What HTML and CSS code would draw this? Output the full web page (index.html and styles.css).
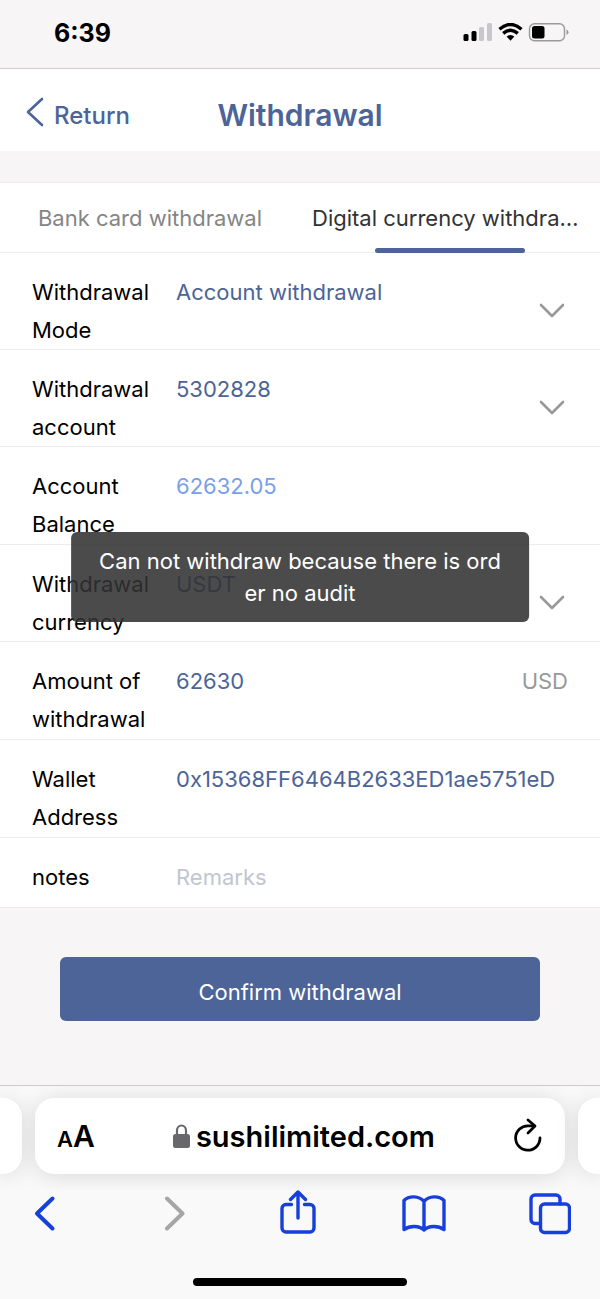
FILE: index.html
```html
<!DOCTYPE html>
<html lang="en">
<head>
<meta charset="utf-8">
<meta name="viewport" content="width=device-width, initial-scale=1">
<title>Withdrawal</title>
<link rel="stylesheet" href="styles.css">
</head>
<body>
<div class="screen">
  <div class="status">
    <span class="status-time">6:39</span>
    <svg class="status-icons" width="106" height="20" viewBox="0 0 106 20" aria-hidden="true">
      <rect x="0.5" y="11" width="5" height="7" rx="1.5"/>
      <rect x="8.500" y="8" width="5" height="10" rx="1.500"/>
      <rect x="16" y="4" width="5" height="14" rx="1.500" fill="#c8c7c9"/>
      <rect x="24" y="0" width="5" height="18" rx="1.500" fill="#c8c7c9"/>
      <g fill="none" stroke="#000" stroke-width="3.400">
        <path d="M36.500 6.200Q47.500-3.200 58.500 6.200"/>
        <path d="M40.200 10.400Q47.500 4.200 54.800 10.400"/>
      </g>
      <path d="M43.600 13.600Q47.500 10.600 51.400 13.600L47.500 17.800Z"/>
      <rect x="66.500" y="0.700" width="35" height="17" rx="5" fill="none" stroke="#9a999b" stroke-width="1.400"/>
      <rect x="69" y="3" width="12.500" height="12.500" rx="2.500"/>
      <path d="M103.500 6.500q2 .8 2 2.700t-2 2.700z" fill="#9a999b"/>
    </svg>
  </div>

  <main class="page">
    <header class="header">
      <a class="back" href="#">
        <svg width="18" height="30" viewBox="0 0 18 30" aria-hidden="true"><path d="M16 2L2 15l14 13" fill="none" stroke="currentColor" stroke-width="2.600" stroke-linecap="round" stroke-linejoin="round"/></svg>
        <span>Return</span>
      </a>
      <h1 class="title">Withdrawal</h1>
    </header>

    <nav class="tabs">
      <button class="tab" type="button"><span class="tab-text">Bank card withdrawal</span></button>
      <button class="tab tab-active" type="button"><span class="tab-text">Digital currency withdrawal</span></button>
    </nav>

    <form class="form">
      <div class="row">
        <label class="label" for="mode">Withdrawal Mode</label>
        <select class="field" id="mode"><option>Account withdrawal</option></select>
        <svg class="chevron" width="26" height="16" viewBox="0 0 26 16" aria-hidden="true"><path d="M2 2l11 11L24 2"/></svg>
      </div>
      <div class="row">
        <label class="label" for="account">Withdrawal account</label>
        <select class="field" id="account"><option>5302828</option></select>
        <svg class="chevron" width="26" height="16" viewBox="0 0 26 16" aria-hidden="true"><path d="M2 2l11 11L24 2"/></svg>
      </div>
      <div class="row row-entry">
        <label class="label" for="balance">Account Balance</label>
        <output class="field field-balance" id="balance">62632.05</output>
      </div>
      <div class="row">
        <label class="label" for="currency">Withdrawal currency</label>
        <select class="field" id="currency"><option>USDT</option></select>
        <svg class="chevron" width="26" height="16" viewBox="0 0 26 16" aria-hidden="true"><path d="M2 2l11 11L24 2"/></svg>
      </div>
      <div class="row row-entry">
        <label class="label" for="amount">Amount of withdrawal</label>
        <input class="field" id="amount" type="text" value="62630">
        <span class="unit">USD</span>
      </div>
      <div class="row row-entry">
        <label class="label" for="wallet">Wallet Address</label>
        <input class="field" id="wallet" type="text" value="0x15368FF6464B2633ED1ae5751eD">
      </div>
      <div class="row row-notes">
        <label class="label" for="notes">notes</label>
        <input class="field" id="notes" type="text" placeholder="Remarks">
      </div>
      <div class="actions">
        <button class="confirm" type="button">Confirm withdrawal</button>
      </div>
    </form>

    <div class="toast" role="alert">Can not withdraw because there is ord<br>er no audit</div>
  </main>

  <footer class="browser">
    <div class="strip">
      <div class="peek peek-left"></div>
      <div class="address">
        <button class="icon-button text-size" type="button" aria-label="Text size"><span class="small-a">A</span><span class="large-a">A</span></button>
        <div class="site">
          <svg width="17" height="24" viewBox="0 0 17 24" aria-hidden="true"><path d="M4 11V6.500a4.500 5 0 0 1 9 0V11" fill="none" stroke="#68676c" stroke-width="2.200"/><rect x="0" y="10" width="17" height="14" rx="2.500" fill="#68676c"/></svg>
          <span>sushilimited.com</span>
        </div>
        <button class="icon-button reload" type="button" aria-label="Reload">
          <svg width="30" height="34" viewBox="0 0 30 34" fill="none" stroke="#000" stroke-width="2.800" stroke-linecap="round" stroke-linejoin="round" aria-hidden="true"><path d="M27 20A12.200 12.200 0 1 1 15 7.800H21"/><path d="M15 2l7 6-7 7"/></svg>
        </button>
      </div>
      <div class="peek peek-right"></div>
    </div>
    <div class="toolbar">
      <button class="icon-button" type="button" aria-label="Back"><svg width="22" height="46" viewBox="0 0 22 46" aria-hidden="true"><path d="M18.500 8.500L3 23.500l15.500 15" stroke-width="4"/></svg></button>
      <button class="icon-button forward" type="button" aria-label="Forward"><svg width="28" height="46" viewBox="0 0 28 46" aria-hidden="true"><path d="M10 8.500l15.500 15L10 38.500" stroke-width="4"/></svg></button>
      <button class="icon-button" type="button" aria-label="Share"><svg width="36" height="46" viewBox="0 0 36 46" aria-hidden="true"><path d="M11.500 14.500H6a4 4 0 0 0-4 4V38a4 4 0 0 0 4 4h24a4 4 0 0 0 4-4V18.500a4 4 0 0 0-4-4h-5.500M18 28V3M10.500 9.500L18 2l7.500 7.500"/></svg></button>
      <button class="icon-button" type="button" aria-label="Bookmarks"><svg width="44" height="46" viewBox="0 0 44 46" aria-hidden="true"><path d="M22 11.500C17 5.500 7 5.500 2 10.500V39.500C8 35.500 17 35.500 22 40C27 35.500 36 35.500 42 39.500V10.500C37 5.500 27 5.500 22 11.500ZM22 11.500V40"/></svg></button>
      <button class="icon-button" type="button" aria-label="Tabs"><svg width="42" height="46" viewBox="0 0 42 46" aria-hidden="true"><rect x="11.500" y="14" width="29" height="28.500" rx="4"/><path d="M31 14V9a4 4 0 0 0-4-4H6a4 4 0 0 0-4 4v20.500a4 4 0 0 0 4 4h5.500"/></svg></button>
    </div>
    <div class="home"></div>
  </footer>
</div>
</body>
</html>
```
FILE: styles.css
```css
* { box-sizing: border-box; }

body {
  margin: 0;
  font-family: Inter, "Liberation Sans", sans-serif;
  font-size: 22px;
  color: #000;
  background: #f7f5f6;
}

button, input, select, output { font: inherit; color: inherit; }

button {
  padding: 0;
  border: 0;
  background: none;
}

.screen {
  display: flex;
  flex-direction: column;
  min-height: 100vh;
}

.status {
  display: flex;
  justify-content: space-between;
  align-items: center;
  height: 69px;
  padding: 0 31px 2px 54px;
  border-bottom: 1px solid #d0ced0;
}

.status-time {
  font-size: 25px;
  font-weight: 700;
}

.page {
  position: relative;
  flex: 1;
}

.header {
  display: grid;
  grid-template-columns: 1fr auto 1fr;
  align-items: center;
  height: 82px;
  padding: 10px 26px 0;
  background: #fff;
  color: #4c6497;
}

.back {
  display: flex;
  align-items: center;
  gap: 10px;
  color: inherit;
  font-size: 24px;
  font-weight: 500;
  text-decoration: none;
}

.back svg { margin-bottom: 6px; }

.title {
  margin: 0;
  font-size: 30px;
  font-weight: 600;
}

.tabs {
  display: grid;
  grid-template-columns: 1fr 1fr;
  height: 71px;
  margin-top: 31px;
  border: solid #eeedee;
  border-width: 1px 0;
  background: #fff;
}

.tab {
  position: relative;
  min-width: 0;
  padding: 0 12px;
  color: #858585;
}

.tab-active { color: #323233; }

.tab-text {
  display: block;
  overflow: hidden;
  line-height: 32px;
  text-overflow: ellipsis;
  white-space: nowrap;
}

.tab-active::after {
  content: "";
  position: absolute;
  bottom: -1px;
  left: 25%;
  width: 50%;
  height: 5px;
  border-radius: 3px;
  background: #4c6497;
}

.row {
  display: flex;
  align-items: flex-start;
  padding: 20px 32px 0;
  border-bottom: 1px solid #eeedee;
  background: #fff;
  line-height: 38px;
}

.row-entry { padding-bottom: 1px; }

.row-notes { padding-bottom: 11px; }

.label {
  flex: none;
  width: 120px;
  margin-right: 24px;
}

.field {
  flex: 1;
  min-width: 0;
  height: 38px;
  padding: 0;
  border: 0;
  outline: 0;
  appearance: none;
  background: none;
  color: #4c6497;
}

.field-balance { color: #7a9fe9; }

.field::placeholder {
  color: #c0c6d2;
  opacity: 1;
}

.unit { color: #999; }

.chevron {
  align-self: center;
  margin: 0 3px 0 0;
  fill: none;
  stroke: #999;
  stroke-width: 2.6;
  stroke-linecap: round;
  stroke-linejoin: round;
}

.actions { padding: 49px 60px; }

.confirm {
  width: 100%;
  height: 64px;
  padding-top: 6px;
  border-radius: 6px;
  background: #4c6497;
  color: #fff;
}

.toast {
  position: absolute;
  top: 50%;
  left: 50%;
  padding: 13px 28px;
  border-radius: 6px;
  background: rgba(50, 50, 51, 0.88);
  color: #fff;
  line-height: 32px;
  text-align: center;
  white-space: nowrap;
  transform: translate(-50%, -50%);
}

.browser {
  border-top: 1px solid #cccbcd;
  background: #f9f9f9;
}

.strip {
  display: flex;
  gap: 13px;
  padding: 12px 0 16px;
  overflow: hidden;
}

.address, .peek {
  height: 76px;
  background: #fff;
  box-shadow: 0 2px 22px rgba(0, 0, 0, 0.13);
}

.address {
  display: flex;
  flex: 1;
  justify-content: space-between;
  align-items: center;
  padding: 0 22px;
  border-radius: 19px;
}

.peek { width: 22px; }

.peek-left { border-radius: 0 19px 19px 0; }

.peek-right { border-radius: 19px 0 0 19px; }

.icon-button { display: flex; }

.text-size {
  align-items: baseline;
  font-weight: 600;
}

.large-a { font-size: 30px; }

.reload { padding-bottom: 3px; }

.site {
  display: flex;
  align-items: center;
  gap: 6px;
  font-size: 29px;
  font-weight: 600;
}

.toolbar {
  display: flex;
  justify-content: space-between;
  padding: 0 28px 0 23px;
  color: #163fdc;
}

.toolbar .icon-button {
  justify-content: center;
  width: 44px;
}

.toolbar svg {
  fill: none;
  stroke: currentColor;
  stroke-width: 3.4;
  stroke-linecap: round;
  stroke-linejoin: round;
}

.toolbar .forward { color: #a6a6a6; }

.home {
  width: 214px;
  height: 8px;
  margin: 42px auto 13px;
  border-radius: 4px;
  background: #000;
}
```
